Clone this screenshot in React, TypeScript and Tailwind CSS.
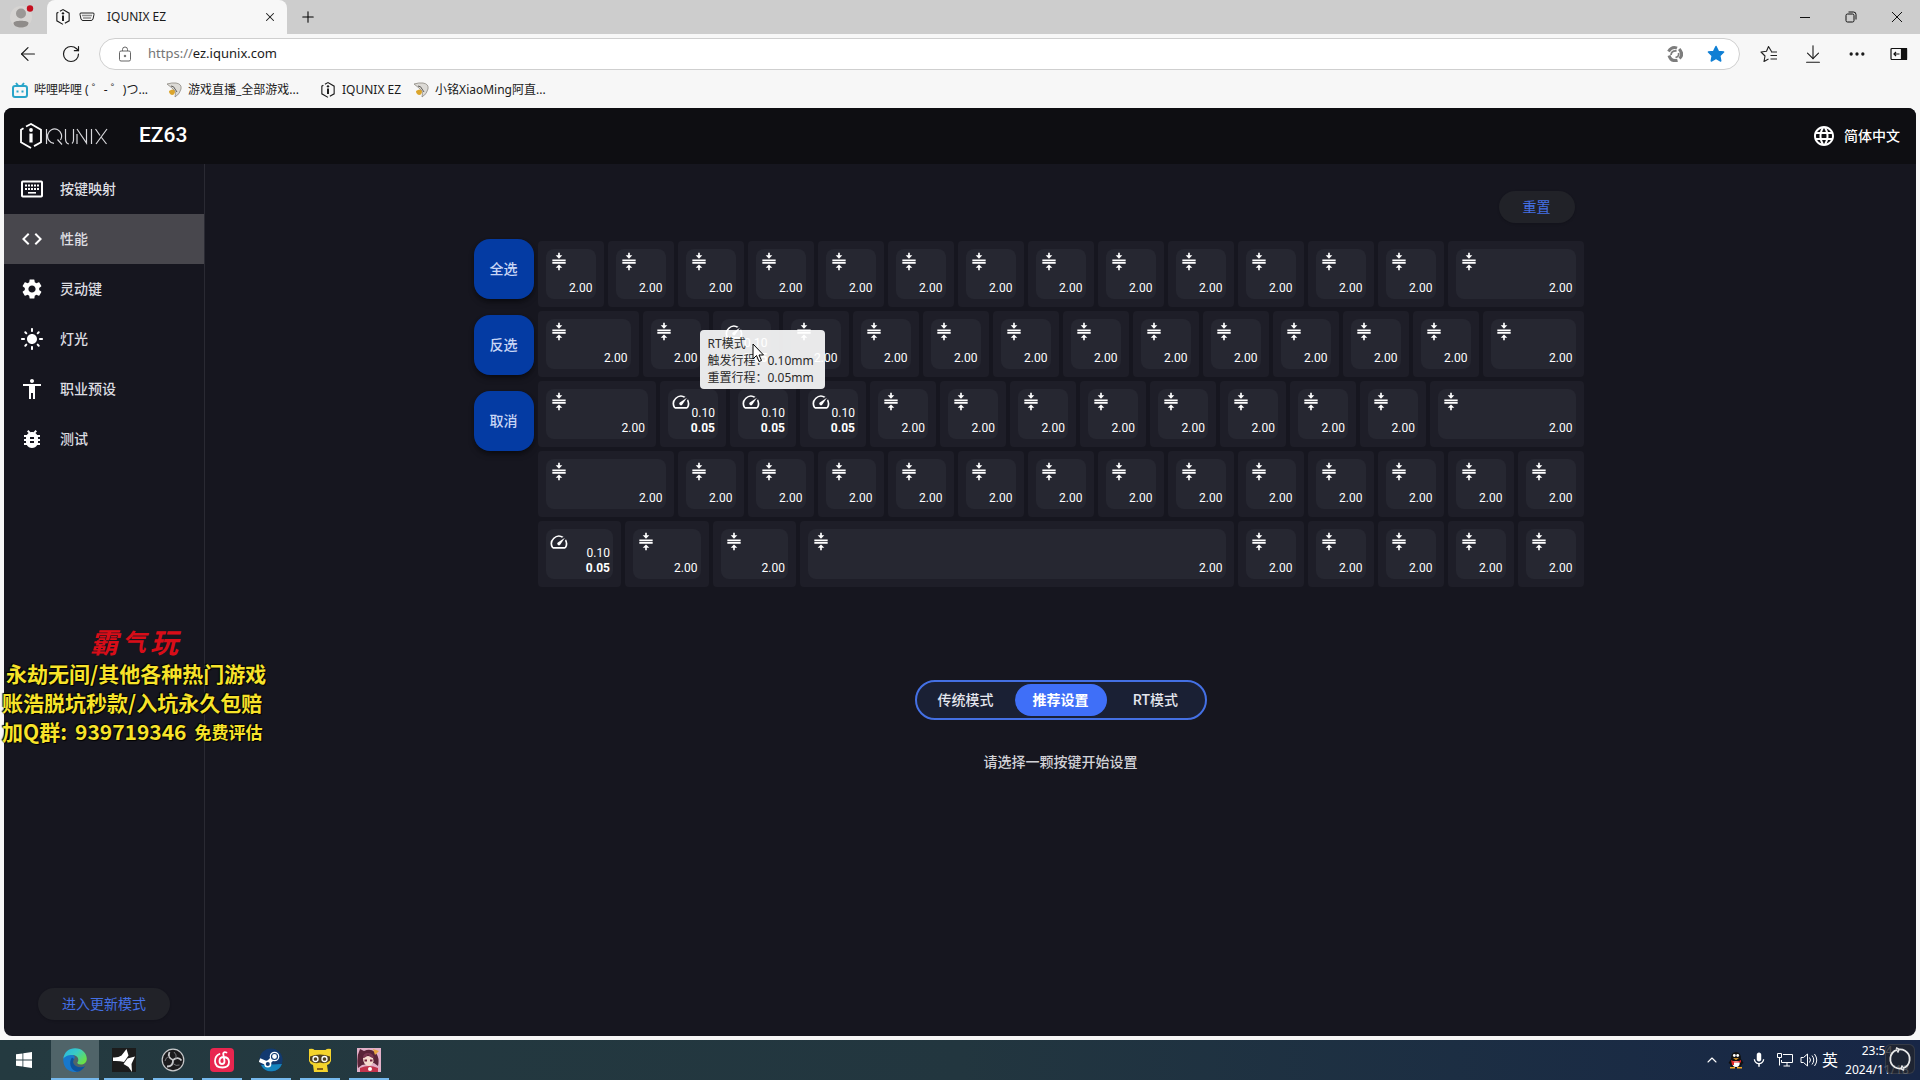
import type { ReactNode } from "react";
import {
  MdAccessibility,
  MdBugReport,
  MdCode,
  MdLanguage,
  MdLightMode,
  MdMic,
  MdSettings,
  MdSpeed,
} from "react-icons/md";
import { ArrowDownToLine, ArrowLeft, ChevronUp, Ellipsis, Plus, RotateCw, X } from "lucide-react";

const UI_FONT = "font-['Noto_Sans','Noto_Sans_CJK_SC',sans-serif]";
const APP_FONT = "font-['Roboto','Noto_Sans_CJK_SC',sans-serif]";

type Key = { span: string; rt?: boolean };

const U1 = "col-span-4";
const U125 = "col-span-5";
const U15 = "col-span-6";
const U175 = "col-span-7";
const U2 = "col-span-8";
const U225 = "col-span-9";
const U625 = "col-span-25";

const run = (count: number): Key[] => Array.from({ length: count }, () => ({ span: U1 }));
const rt = (span: string): Key => ({ span, rt: true });

// one grid column is a quarter of a key unit, every row adds up to 15u
const ROWS: Key[][] = [
  [...run(13), { span: U2 }],
  [{ span: U15 }, ...run(1), rt(U1), ...run(10), { span: U15 }],
  [{ span: U175 }, rt(U1), rt(U1), rt(U1), ...run(8), { span: U225 }],
  [{ span: U2 }, ...run(13)],
  [rt(U125), { span: U125 }, { span: U125 }, { span: U625 }, ...run(5)],
];

const NAV = [
  { label: "按键映射", icon: KeyboardIcon },
  { label: "性能", icon: MdCode, active: true },
  { label: "灵动键", icon: MdSettings },
  { label: "灯光", icon: MdLightMode },
  { label: "职业预设", icon: MdAccessibility },
  { label: "测试", icon: MdBugReport },
];

export default function App() {
  return (
    <div className={`flex min-h-screen flex-col bg-[#f7f7f7] ${UI_FONT}`}>
      <TabStrip />
      <AddressBar />
      <Bookmarks />
      <div className="flex flex-1 px-1 pb-1">
        <Configurator />
      </div>
      <Taskbar />
    </div>
  );
}

/* ---------- browser ---------- */

function HexLogo({ className }: { className: string }) {
  return (
    <svg viewBox="0 0 24 26" className={className} fill="none" stroke="currentColor" aria-hidden>
      <path d="M7 3.500 12 1l10 5.800v12.400l-7 3.900M12 25 2 19.200V6.800l2.500-1.500" strokeWidth="1.800" />
      <path d="M12 10.500v9" strokeWidth="3.200" />
      <circle cx="12" cy="7" r="1.900" fill="currentColor" stroke="none" />
    </svg>
  );
}

function KeyboardIcon({ className }: { className?: string }) {
  return (
    <svg viewBox="0 0 24 24" className={className} fill="none" stroke="currentColor" strokeWidth="2" aria-hidden>
      <rect x="2" y="4.500" width="20" height="15" rx=".8" />
      <path d="M5 8.500h14M5 12h14" strokeDasharray="2 1" />
      <path d="M8 15.800h8" strokeWidth="1.600" />
    </svg>
  );
}

function TabStrip() {
  return (
    <div className="flex h-[34px] items-stretch bg-[#cdcdcd]">
      <button type="button" aria-label="个人资料" className="w-[47px] pl-2.5">
        <svg viewBox="0 0 24 24" className="size-6">
          <circle cx="11" cy="12" r="11" fill="#d6d4d2" />
          <circle cx="11" cy="8.500" r="5" fill="#9b9896" />
          <path d="M3.500 18c0-3 15-3 15 0 0 6-15 6-15 0" fill="#8f8c8a" />
          <circle cx="20" cy="3.500" r="3.200" fill="#c50f1f" />
        </svg>
      </button>
      <div className="flex w-[240px] items-center rounded-t-lg bg-[#f7f7f7] pl-2 pr-1.5 text-xs text-[#1b1b1b]">
        <HexLogo className="size-4" />
        <svg viewBox="0 0 16 10" className="ml-2 h-2.5 w-4" fill="none" stroke="#222" aria-hidden>
          <path d="M2 1h12q1.500 0 1 1.500L14 7q-.5 1.500-2 1.500H4Q2.500 8.500 2 7L1 2.500Q.5 1 2 1Z" />
          <path d="M3.500 3.500h9M4.500 6h7" strokeWidth="1.500" strokeDasharray="1 1" />
        </svg>
        <span className="ml-3 flex-1">IQUNIX EZ</span>
        <button type="button" aria-label="关闭标签页" className="p-1">
          <X className="size-3.5" strokeWidth={1.8} />
        </button>
      </div>
      <button type="button" aria-label="新建标签页" className="px-3">
        <Plus className="size-[18px]" strokeWidth={1.4} />
      </button>
      <div className="ml-auto flex">
        <button type="button" aria-label="最小化" className="flex w-[46px] items-center justify-center">
          <svg viewBox="0 0 12 12" className="size-3" stroke="#111"><path d="M1 6.500h10" /></svg>
        </button>
        <button type="button" aria-label="还原" className="flex w-[46px] items-center justify-center">
          <svg viewBox="0 0 12 12" className="size-3" fill="none" stroke="#111">
            <rect x="1" y="3" width="8" height="8" rx="1.500" />
            <path d="M3.500 1h5Q11 1 11 3.500v5" />
          </svg>
        </button>
        <button type="button" aria-label="关闭" className="flex w-[46px] items-center justify-center">
          <svg viewBox="0 0 12 12" className="size-3" stroke="#111"><path d="m1 1 10 10M11 1 1 11" /></svg>
        </button>
      </div>
    </div>
  );
}

function AddressBar() {
  return (
    <div className="flex h-10 items-center pr-3 text-[#1b1b1b]">
      <button type="button" aria-label="返回" className="ml-[17px]">
        <ArrowLeft className="size-[22px]" strokeWidth={1.3} />
      </button>
      <button type="button" aria-label="刷新" className="ml-[22px]">
        <RotateCw className="size-5" strokeWidth={1.4} />
      </button>
      <div className="ml-[18px] flex h-8 flex-1 items-center rounded-full border border-[#cfcfcf] bg-white pl-[18px] pr-3.5 text-[13px]">
        <svg viewBox="0 0 14 16" className="h-4 w-3.5" fill="none" stroke="#666" aria-hidden>
          <rect x="1.500" y="5" width="11" height="10" rx="1.500" />
          <path d="M4.500 5V3.500q0-2.500 2.500-2.500t2.500 2.500V5" />
          <circle cx="7" cy="10" r=".8" fill="#666" />
        </svg>
        <label htmlFor="url" className="ml-4 text-[#757575]">https://</label>
        <input id="url" readOnly defaultValue="ez.iqunix.com" className="min-w-0 flex-1 bg-transparent outline-none" />
        <button type="button" aria-label="站点功能">
          <svg viewBox="0 0 16 16" className="size-4" fill="none" stroke="#7d7d7d">
            <path d="M1.500 5.500Q5 0 10 2.200M12.200 3Q17 8.500 12.500 12.500M10.500 14.200Q4 16 2 9.500" strokeWidth="3" />
            <path d="M4 9Q4.500 4.500 9.500 5M11.500 7Q12.500 10.500 8.500 11.500" strokeWidth="1.800" />
          </svg>
        </button>
        <button type="button" aria-label="收藏" className="ml-6">
          <svg viewBox="0 0 24 24" className="size-[18px]" fill="#0f7fd4" stroke="#0f7fd4" strokeWidth="2" strokeLinejoin="round">
            <path d="m12 2 3.100 6.500 7 .9-5.100 4.900 1.300 7-6.300-3.400-6.300 3.400 1.300-7L1.900 9.400l7-.9z" />
          </svg>
        </button>
      </div>
      <button type="button" aria-label="收藏夹" className="ml-5">
        <svg viewBox="0 0 18 18" className="size-[18px]" fill="none" stroke="#222" strokeWidth="1.100" strokeLinejoin="round">
          <path d="M11.500 6.500 8.500 1.500l-2 4.800-5.500.7 4 4-1 5.500 4.500-2.500M11 7h6M10.500 10.500H17M10.500 14H17" />
        </svg>
      </button>
      <button type="button" aria-label="下载" className="ml-6">
        <ArrowDownToLine className="size-[22px]" strokeWidth={1.2} />
      </button>
      <button type="button" aria-label="更多" className="ml-[23px]">
        <Ellipsis className="size-5" strokeWidth={2} />
      </button>
      <button type="button" aria-label="侧边栏" className="ml-[23px]">
        <svg viewBox="0 0 18 14" className="h-3.5 w-[18px]" fill="none" stroke="#111" strokeWidth="1.200">
          <rect x="1" y="1.500" width="15.500" height="11" rx="1" />
          <path d="M11.500 1.500h5v11h-5z" fill="#111" />
          <path d="M9.500 7H4M6 5 4 7l2 2" />
        </svg>
      </button>
    </div>
  );
}

function FishIcon() {
  return (
    <svg viewBox="0 0 16 16" className="size-4 shrink-0" aria-hidden>
      <path d="M1 2q5-1.500 9-1 6 1 5 6-1 5-6 8 1-4 0-6L6 6z" fill="#dcdad6" stroke="#8d8982" strokeWidth=".8" />
      <path d="M3 9q4-3 6 0 0 4-3 4Q3 12 3 9" fill="#dba52c" />
      <path d="M5 4q3 0 4 3l2 3" fill="none" stroke="#5e5b57" />
    </svg>
  );
}

function Bookmarks() {
  return (
    <nav aria-label="收藏夹栏" className="flex h-[34px] items-center gap-6 pl-3 pb-0.5 text-xs text-[#1b1b1b]">
      <a href="#bili" className="flex w-[130px] items-center gap-1.5 whitespace-nowrap">
        <svg viewBox="0 0 16 16" className="size-4 shrink-0" fill="none" stroke="#2aa5c9" strokeWidth="2" aria-hidden>
          <rect x="1" y="4" width="14" height="11" rx="2" />
          <path d="m4 1 2 2.500M12 1l-2 2.500M5.500 8.500v2M10.500 8.500v2" />
        </svg>
        哔哩哔哩 ( ゜- ゜)つ...
      </a>
      <a href="#live" className="flex w-[130px] items-center gap-1.5 whitespace-nowrap"><FishIcon />游戏直播_全部游戏...</a>
      <a href="#ez" className="flex items-center gap-1.5 whitespace-nowrap"><HexLogo className="size-4" />IQUNIX EZ</a>
      <a href="#room" className="-ml-3 flex items-center gap-1.5 whitespace-nowrap"><FishIcon />小铭XiaoMing阿直...</a>
    </nav>
  );
}

/* ---------- configurator page ---------- */

function Configurator() {
  return (
    <div className={`flex flex-1 flex-col rounded-lg bg-[#16161f] text-white ${APP_FONT}`}>
      <header className="flex h-14 items-center rounded-t-lg bg-[#0e0e12] pl-[15px] pr-4">
        <HexLogo className="h-[26px] w-6" />
        <svg viewBox="0 0 64 18" className="ml-0.5 mt-0.5 h-[18px] w-16" role="img" aria-label="IQUNIX" fill="none" stroke="#d8d8dc" strokeWidth="1.200">
          <path d="M1.500 1v15M9 15.300A7 7.200 0 1 1 15.500 12M12.500 11.500l4.500 5M20.500 1v9.500q0 5 3.500 5.500M28.500 1v11q0 2.500-1.500 3.500M32 6v10M32 1l9.500 14V1M46.500 1v15M50.500 1l4.500 6.500M56.500 9.500l5 6.500M62 1 51 16" />
        </svg>
        <h1 className="ml-[30px] text-[21px] font-medium">EZ63</h1>
        <button type="button" className="ml-auto flex items-center gap-2 text-sm font-medium">
          <MdLanguage className="size-6" />
          简体中文
        </button>
      </header>
      <div className="flex flex-1">
        <Sidebar />
        <main className="flex flex-1 flex-col items-center">
          <div className="flex w-[1050px] justify-end pr-[11px] pt-[27px]">
            <PillButton>重置</PillButton>
          </div>
          <Keyboard />
          <ModeSwitch />
          <p className="mt-8 text-sm font-medium leading-5 text-[#d2d2d7]">请选择一颗按键开始设置</p>
        </main>
      </div>
    </div>
  );
}

function PillButton({ children }: { children: ReactNode }) {
  return (
    <button type="button" className="h-8 rounded-full bg-[#212228] px-6 text-sm text-[#4470e4] shadow-sm">
      {children}
    </button>
  );
}

function Sidebar() {
  return (
    <aside className="relative flex w-[201px] flex-col border-r border-[#2a2a33]">
      <nav>
        {NAV.map(({ label, icon: Icon, active }) => (
          <a
            key={label}
            href="#nav"
            className={`flex h-[50px] items-center gap-4 pl-4 text-sm font-medium text-[#dedee2] ${active ? "bg-[#48474d]" : ""}`}
          >
            <Icon className="size-6 text-white" />
            {label}
          </a>
        ))}
      </nav>
      <StreamBanner />
      <div className="mt-auto flex justify-center pb-4">
        <PillButton>进入更新模式</PillButton>
      </div>
    </aside>
  );
}

// stream overlay text floating above the page
function StreamBanner() {
  return (
    <div className="absolute -left-0.5 top-[459px] z-10 whitespace-nowrap font-['Noto_Sans_CJK_SC',sans-serif] text-[21px] font-bold leading-[29px] text-[#f7e32a] [text-shadow:1px_1px_1px_#000,-1px_-1px_1px_#000]">
      <p className="flex items-center gap-1 pl-[88px] text-[28px] italic leading-[36px] text-[#d80d18] [text-shadow:none]">
        霸<span className="text-2xl">气</span><span>玩</span>
      </p>
      <p className="pl-1">永劫无间/其他各种热门游戏</p>
      <p>账浩脱坑秒款/入坑永久包赔</p>
      <p className="flex gap-2">
        <span>加Q群:</span>
        <span>939719346</span>
        <span className="text-[17px]">免费评估</span>
      </p>
    </div>
  );
}

function CollapseIcon() {
  return (
    <svg viewBox="0 0 24 24" className="size-5" fill="currentColor" aria-hidden>
      <path d="M4 12h16v2H4zM4 9h16v2H4zM16 4l-4 4-4-4h3V1h2v3zM8 19l4-4 4 4h-3v3h-2v-3z" />
    </svg>
  );
}

function KeyCap({ span, rt: isRt }: Key) {
  return (
    <div className={`${span} h-[70px] p-0.5`}>
      <button type="button" className="flex size-full rounded bg-[#1e1e28] p-2 text-xs leading-[15px]">
        <span className="flex size-full justify-between rounded-lg bg-[#262731] p-[3px]">
          {isRt ? <MdSpeed className="size-5 shrink-0" /> : <CollapseIcon />}
          <span className="-ml-5 flex flex-col self-end text-right">
            {isRt ? (
              <>
                <span>0.10</span>
                <span className="font-bold">0.05</span>
              </>
            ) : (
              "2.00"
            )}
          </span>
        </span>
      </button>
    </div>
  );
}

function Keyboard() {
  return (
    <div className="mt-4 grid grid-cols-[60px_1050px_60px] gap-0.5">
      <div className="flex flex-col gap-4">
        {["全选", "反选", "取消"].map((label) => (
          <button
            key={label}
            type="button"
            className="size-[60px] rounded-2xl bg-[#043ba3] text-sm font-medium text-[#c9d6f5] shadow-md shadow-black/40"
          >
            {label}
          </button>
        ))}
      </div>
      <div className="relative">
        {ROWS.map((row, i) => (
          <div key={i} className="grid grid-cols-[repeat(60,minmax(0,1fr))]">
            {row.map((key, j) => (
              <KeyCap key={j} {...key} />
            ))}
          </div>
        ))}
        <Tooltip />
      </div>
    </div>
  );
}

function Tooltip() {
  return (
    <div
      role="tooltip"
      className={`absolute left-[164px] top-[91px] w-[125px] whitespace-nowrap rounded bg-white/90 pb-[3px] pl-2 pt-[5px] text-xs leading-[17px] text-[#2b2b2b] ${UI_FONT}`}
    >
      <p>RT模式</p>
      <p>触发行程：0.10mm</p>
      <p>重置行程：0.05mm</p>
      <svg viewBox="0 0 12 20" className="absolute left-[52px] top-[13px] h-5 w-3" fill="#fff" stroke="#000" aria-hidden>
        <path d="M1 1v15l3.500-3.500L7 18.500l2.500-1L7 12h4.500z" />
      </svg>
    </div>
  );
}

function ModeSwitch() {
  return (
    <div className="mt-[91px] flex h-10 w-[292px] items-center rounded-full border-2 border-[#4470e4] bg-[#1a2034] text-sm font-medium text-[#e4e6ee]">
      <button type="button" className="h-full flex-1">传统模式</button>
      <button type="button" className="h-8 w-[92px] rounded-full bg-[#3f6ff8] font-bold text-white">推荐设置</button>
      <button type="button" className="h-full flex-1">RT模式</button>
    </div>
  );
}

/* ---------- taskbar ---------- */

function TaskButton({ label, active, children }: { label: string; active?: boolean; children: ReactNode }) {
  return (
    <button
      type="button"
      aria-label={label}
      className={`flex h-10 items-center justify-center border-b-2 border-[#76b9ed] pt-0.5 ${active ? "w-12 bg-[#506469]" : "w-10"}`}
    >
      <svg viewBox="0 0 24 24" className="size-6">{children}</svg>
    </button>
  );
}

function Taskbar() {
  return (
    <footer className="flex h-10 bg-linear-to-r from-[#243a40] via-[#22363f] to-[#172646] text-white">
      <button type="button" aria-label="开始" className="flex w-[51px] items-center pl-4">
        <svg viewBox="0 0 16 16" className="size-4" fill="#fff">
          <path d="M0 2.300 6.500 1.400v6.200H0zM7.300 1.300 16 0v7.600H7.300zM0 8.400h6.500v6.200L0 13.700zM7.300 8.400H16V16l-8.700-1.300z" />
        </svg>
      </button>
      <div className="flex gap-[9px]">
        <div className="-mr-1">
          <TaskButton label="Microsoft Edge" active>
            <defs>
              <linearGradient id="edgeTop" x1="0" y1="0" x2="1" y2=".7">
                <stop offset="0" stopColor="#27b5e4" />
                <stop offset=".5" stopColor="#3acbc4" />
                <stop offset="1" stopColor="#6be043" />
              </linearGradient>
            </defs>
            <path d="M.2 12C1 6 6 5 10 7q3 2 1 4-3 4 1 7 5 3 9.500 0Q18 24 12 24 1 23.500.2 12" fill="#1778cc" />
            <path d="M9 9.500C5.500 14 7 22 14 23.800q5-.8 8-5.600-5 2.500-9.500-.5-4-3-1.500-6.700z" fill="#0c529b" />
            <path d="M.3 11C1 4 6 .2 12 .2c7 0 11.800 5 11.800 10.500 0 3.800-2.800 5.800-6 5.800-2.300 0-3.500-.9-3.500-1.700 0-.6 1-1.200 1-3C15.300 9 12.500 7 9 7 5 7 1.500 8.500.3 11" fill="url(#edgeTop)" />
          </TaskButton>
        </div>
        <TaskButton label="剪辑">
          <rect width="24" height="24" fill="#1c1c1c" />
          <path d="M1 9.500q5 .5 8.500-2L14.500 1l2 6.500L12 14q-5-1.500-11-1zM23 8.500 19.500 16l.5 8-3.500-5-5-3 4-5.500z" fill="#fff" />
        </TaskButton>
        <TaskButton label="OBS Studio">
          <circle cx="12" cy="12" r="10.800" fill="#1b1b1d" stroke="#c7c9cb" strokeWidth="1.200" />
          <path d="M12 12Q6 9.500 8.500 4M12 12q5-4 8.500.5M12 12q.5 6.500-6 6.500" fill="none" stroke="#c7c9cb" strokeWidth="1.800" />
          <path d="M8.500 8q-4 1.500-4.500 5M15 10.500q1-4-2-6.500M12 15.500q3 3 6.500 1.500" fill="none" stroke="#77797c" />
        </TaskButton>
        <TaskButton label="网易云音乐">
          <rect width="24" height="24" rx="4" fill="#e8264f" />
          <path d="M16.500 4.500q-3-1-3.300 1.200L14.500 13q0 3-2.500 3t-2.500-3q0-4 4.500-4 5 .5 5 5 0 5.500-6.500 5.500Q5 19.500 5 13q0-5 4.500-7" fill="none" stroke="#fff" strokeWidth="1.800" strokeLinecap="round" />
        </TaskButton>
        <TaskButton label="Steam">
          <circle cx="12" cy="12" r="11.500" fill="#123a70" />
          <path d="M2 17a11.500 11.500 0 0 0 21-1z" fill="#1685bd" />
          <path d="m.5 12 8 3.500 6-6" fill="none" stroke="#fff" strokeWidth="4" />
          <circle cx="15.500" cy="8.500" r="4.800" fill="#fff" />
          <circle cx="15.500" cy="8.500" r="3" fill="#fff" stroke="#123a70" strokeWidth="1.200" />
          <circle cx="8.800" cy="16" r="2.800" fill="#123a70" stroke="#fff" strokeWidth="1.500" />
        </TaskButton>
        <TaskButton label="游戏助手">
          <path d="M1 1q4-1 5.500 1h11Q19 0 23 1v12q-1 3-4 4l1 7H6l-1-7q-3-1-4-4z" fill="#f5d32c" />
          <path d="M2 8.500q10-4 20 0v4q-4 4-10 2-6 2-10-2z" fill="#51401f" />
          <circle cx="7.500" cy="11" r="2.500" fill="#51401f" stroke="#fff" strokeWidth="1.300" />
          <circle cx="16.500" cy="11" r="2.500" fill="#51401f" stroke="#fff" strokeWidth="1.300" />
          <path d="M9 21h6" stroke="#876218" strokeWidth="2" />
        </TaskButton>
        <TaskButton label="动漫游戏">
          <rect width="24" height="24" fill="#e2b0c8" />
          <path d="M3 1l4 2q6-3 11 1 5 5 3 14l-4-3-12 2-4 3Q-1 9 3 1" fill="#5b2438" />
          <path d="M6 10q5-4 10 0 2 6-4 8-6-1-6-8" fill="#f6dccf" />
          <path d="M6 10q3 0 5-4 2 4 6 4-1-5-6-5T6 10" fill="#7b3650" />
          <path d="M7.500 12.500H10M13 12.500h2.500" stroke="#77203f" strokeWidth="2" />
          <path d="M3 20q9-4 18 0v4H3z" fill="#c2334c" />
          <path d="m16 1 6 2-4 4z" fill="#e9a53f" />
          <circle cx="13" cy="21" r="2" fill="#fff" />
        </TaskButton>
      </div>

      <div className="relative ml-auto flex items-center">
        <ChevronUp className="size-4" strokeWidth={1.6} />
        <svg viewBox="0 0 16 18" className="ml-2 h-[18px] w-4" aria-hidden>
          <path d="M3 8Q3 1 8 1t5 7l2.500 4-1.500 1q-1 4-6 4t-6-4L.5 12z" fill="#111" />
          <path d="M4.500 10h7q1 6-3.500 6t-3.500-6" fill="#fff" />
          <circle cx="6.300" cy="4.500" r="1.400" fill="#fff" />
          <circle cx="9.700" cy="4.500" r="1.400" fill="#fff" />
          <path d="M3 9q5 3 10 0v2.500H6V14H4z" fill="#e02424" />
          <path d="M5 7.200h6L8 9zM2 16h5v1.500H2zM9 16h5v1.500H9z" fill="#f4a623" />
        </svg>
        <MdMic className="ml-1.5 size-[18px]" />
        <svg viewBox="0 0 18 16" className="ml-2 h-4 w-[18px]" fill="none" stroke="#fff" aria-hidden>
          <path d="M7 2.500h9.500v8H5.500V8M11 10.500V14M7.500 14H14M1.500 1.500h4v4h-4zM3.500 5.500v8" />
        </svg>
        <svg viewBox="0 0 18 16" className="ml-1.5 h-4 w-[18px]" fill="none" stroke="#fff" aria-hidden>
          <path d="M1 5.500h2.500L7.500 2v12l-4-3.500H1zM9.500 5.500q2 2.500 0 5M12 3.500q3.500 4.500 0 9M14.500 2q4.500 6 0 12" />
        </svg>
        <span className="ml-1 text-base leading-5">英</span>
        <div className="ml-1.5 w-[66px] whitespace-nowrap text-center text-xs leading-[19px]">
          <p>23:54</p>
          <p>2024/11/18</p>
        </div>
        <div className="w-2.5" />
        <div className="absolute right-[5px] top-1 flex size-[30px] items-center justify-center rounded-md border border-white/10 bg-[#20242d]/80">
          <svg viewBox="0 0 24 24" className="size-6" fill="none" stroke="#e8e8e8" strokeWidth="1.800" aria-hidden>
            <path d="M9 2.800A9.700 9.700 0 0 0 7 20.300M15 21.200A9.700 9.700 0 0 0 17 3.700M7 20.300A9.700 9.700 0 0 0 13 21.600M17 3.700A9.700 9.700 0 0 0 11 2.400M8 .8l3 1.600L9.500 5.500M16 23.200l-3-1.600 1.500-3.100" />
          </svg>
        </div>
      </div>
    </footer>
  );
}
